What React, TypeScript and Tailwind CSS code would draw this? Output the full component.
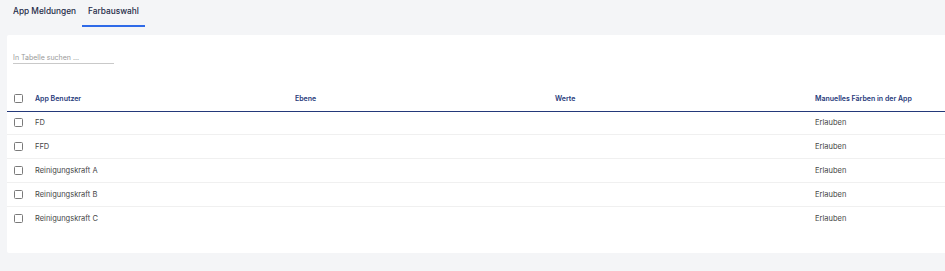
const columns = ['App Benutzer', 'Ebene', 'Werte', 'Manuelles Färben in der App'];

const rows = [
  { name: 'FD', ebene: '', werte: '', manuell: 'Erlauben' },
  { name: 'FFD', ebene: '', werte: '', manuell: 'Erlauben' },
  { name: 'Reinigungskraft A', ebene: '', werte: '', manuell: 'Erlauben' },
  { name: 'Reinigungskraft B', ebene: '', werte: '', manuell: 'Erlauben' },
  { name: 'Reinigungskraft C', ebene: '', werte: '', manuell: 'Erlauben' },
];

function Checkbox() {
  return <span className="block w-[9px] h-[9px] border border-[#7a7a7a] rounded-[1.5px] bg-white" />;
}

export default function App() {
  return (
    <div className="w-full h-[271px] overflow-hidden bg-[#f4f5f7] font-['Inter',sans-serif]">
      {/* Tabs */}
      <div className="flex pl-[7px] h-[27px]">
        <button className="px-[6px] pt-[6px] pb-[8px] text-[8.3px] leading-[11px] font-medium text-[#1f2b48] border-b-2 border-transparent">
          App Meldungen
        </button>
        <button className="px-[6px] pt-[6px] pb-[8px] text-[8.3px] leading-[11px] font-medium text-[#1f2b48] border-b-2 border-[#2f6ae8]">
          Farbauswahl
        </button>
      </div>

      {/* Card */}
      <div className="mt-[8px] ml-[7px] w-[960px] h-[218px] bg-white rounded-[2px]">
        <div className="pt-[17px] pl-[6px]">
          <div className="w-[101px] h-[12px] border-b border-[#c9c9c9] flex items-center">
            <input
              placeholder="In Tabelle suchen ..."
              className="block w-full h-[10px] text-[7px] leading-[10px] text-[#333] placeholder:text-[#9a9a9a] outline-none"
            />
          </div>
        </div>

        <table className="mt-[23px] w-full border-collapse table-fixed">
          <colgroup>
            <col className="w-[28px]" />
            <col className="w-[260px]" />
            <col className="w-[260px]" />
            <col className="w-[260px]" />
            <col />
          </colgroup>
          <thead>
            <tr className="h-[24px] border-b-[1.5px] border-[#24397a]">
              <th className="pl-[7px]"><Checkbox /></th>
              {columns.map((c) => (
                <th key={c} className="text-left text-[7px] font-semibold text-[#26397a] whitespace-nowrap">
                  {c}
                </th>
              ))}
            </tr>
          </thead>
          <tbody>
            {rows.map((r) => (
              <tr key={r.name} className="h-[23.75px] border-b border-[#f0f0f0] last:border-0">
                <td className="pl-[7px]"><Checkbox /></td>
                <td className="text-[7.5px] text-[#454545]">{r.name}</td>
                <td className="text-[7.5px] text-[#454545]">{r.ebene}</td>
                <td className="text-[7.5px] text-[#454545]">{r.werte}</td>
                <td className="text-[7.5px] text-[#454545]">{r.manuell}</td>
              </tr>
            ))}
          </tbody>
        </table>
      </div>
    </div>
  );
}
